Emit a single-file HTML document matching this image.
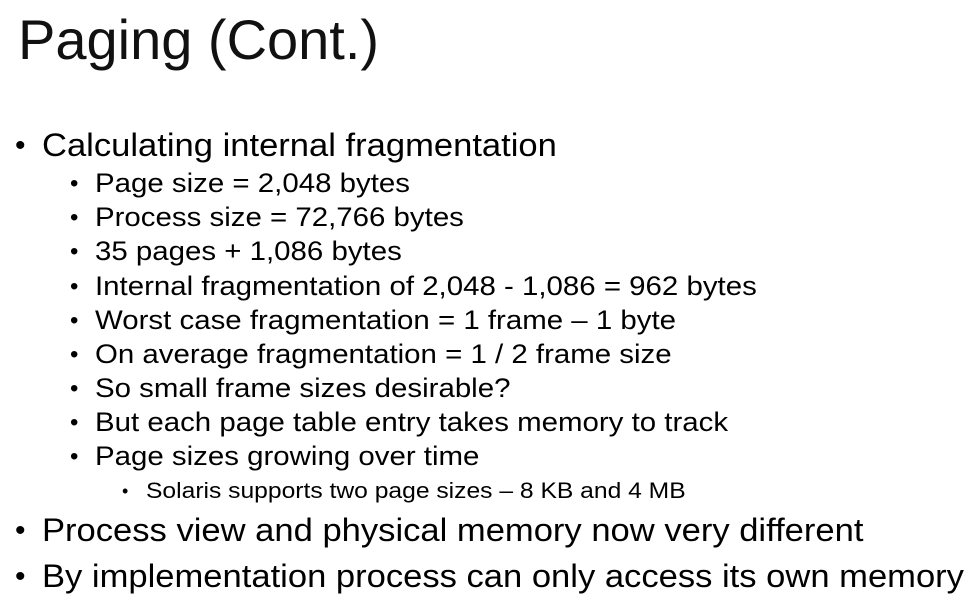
<!DOCTYPE html>
<html><head><meta charset="utf-8"><style>
body{margin:0;width:972px;height:610px;background:#fff;overflow:hidden;font-family:"Liberation Sans",sans-serif;color:#000;position:relative}
.t{position:absolute;white-space:nowrap;transform-origin:0 50%;line-height:1}
.l1{transform:scaleX(1.08)}
.l2{transform:scaleX(1.09)}
.l3{transform:scaleX(1.12)}
.b{position:absolute;white-space:nowrap;line-height:1}
</style></head><body>
<div class="t" style="left:18px;top:12px;font-size:56px;transform:scaleX(1.0);color:#111">Paging (Cont.)</div>

<div class="b" style="left:15px;top:131px;font-size:30px">•</div>
<div class="t l1" style="left:42px;top:129px;font-size:32px">Calculating internal fragmentation</div>

<div class="b" style="left:70px;top:172px;font-size:24px">•</div>
<div class="t l2" style="left:95px;top:170px;font-size:27px">Page size = 2,048 bytes</div>
<div class="b" style="left:70px;top:206px;font-size:24px">•</div>
<div class="t l2" style="left:95px;top:204px;font-size:27px">Process size = 72,766 bytes</div>
<div class="b" style="left:70px;top:240px;font-size:24px">•</div>
<div class="t l2" style="left:95px;top:238px;font-size:27px">35 pages + 1,086 bytes</div>
<div class="b" style="left:70px;top:275px;font-size:24px">•</div>
<div class="t l2" style="left:95px;top:273px;font-size:27px">Internal fragmentation of 2,048 - 1,086 = 962 bytes</div>
<div class="b" style="left:70px;top:309px;font-size:24px">•</div>
<div class="t l2" style="left:95px;top:307px;font-size:27px">Worst case fragmentation = 1 frame – 1 byte</div>
<div class="b" style="left:70px;top:343px;font-size:24px">•</div>
<div class="t l2" style="left:95px;top:341px;font-size:27px">On average fragmentation = 1 / 2 frame size</div>
<div class="b" style="left:70px;top:377px;font-size:24px">•</div>
<div class="t l2" style="left:95px;top:375px;font-size:27px">So small frame sizes desirable?</div>
<div class="b" style="left:70px;top:411px;font-size:24px">•</div>
<div class="t l2" style="left:95px;top:409px;font-size:27px">But each page table entry takes memory to track</div>
<div class="b" style="left:70px;top:445px;font-size:24px">•</div>
<div class="t l2" style="left:95px;top:443px;font-size:27px">Page sizes growing over time</div>

<div class="b" style="left:122px;top:482px;font-size:18px">•</div>
<div class="t l3" style="left:146px;top:480px;font-size:22px">Solaris supports two page sizes – 8 KB and 4 MB</div>

<div class="b" style="left:15px;top:516px;font-size:30px">•</div>
<div class="t l1" style="left:42px;top:514px;font-size:32px">Process view and physical memory now very different</div>
<div class="b" style="left:15px;top:562px;font-size:30px">•</div>
<div class="t l1" style="left:42px;top:560px;font-size:32px">By implementation process can only access its own memory</div>
</body></html>
